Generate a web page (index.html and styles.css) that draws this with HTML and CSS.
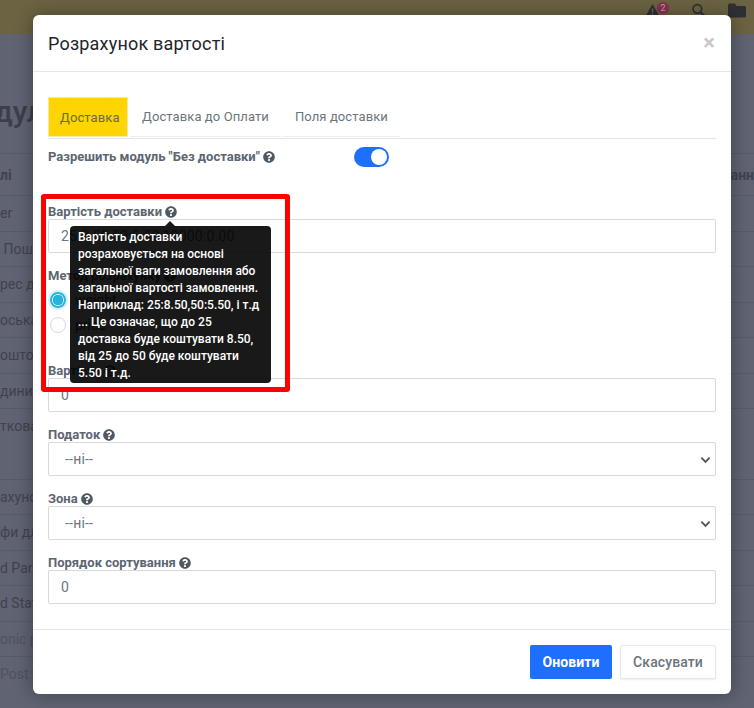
FILE: index.html
```html
<!DOCTYPE html>
<html lang="uk">
<head>
<meta charset="utf-8">
<title>Розрахунок вартості</title>
<link rel="stylesheet" href="styles.css">
</head>
<body>
<svg class="defs" width="0" height="0" aria-hidden="true">
  <symbol id="q" viewBox="0 0 512 512"><path d="M504 256c0 136.997-111.043 248-248 248S8 392.997 8 256C8 119.083 119.043 8 256 8s248 111.083 248 248zM262.655 90c-54.497 0-89.255 22.957-116.045 63.596-3.471 5.266-2.31 12.341 2.739 16.2l34.699 26.31c5.205 3.947 12.621 3.008 16.665-2.122 17.864-22.658 30.113-35.797 57.303-35.797 20.429 0 45.698 13.148 45.698 32.958 0 14.976-12.363 22.667-32.534 33.976C247.128 238.528 216 254.941 216 296v4c0 6.627 5.373 12 12 12h56c6.627 0 12-5.373 12-12v-1.333c0-28.462 83.186-29.647 83.186-106.667 0-58.002-60.165-102-116.531-102zM256 338c-25.365 0-46 20.635-46 46 0 25.364 20.635 46 46 46s46-20.636 46-46c0-25.365-20.635-46-46-46z"/></symbol>
</svg>

<div class="page">
  <header class="topbar">
    <span class="alert">
      <svg class="top-icon" viewBox="0 0 20 18"><path d="M10 1 19.5 17.5H.5z" fill="#2f2f35"/><path d="M9 6.5h2v6H9zM9 13.5h2v2H9z" fill="#6b6342"/></svg>
      <span class="badge">2</span>
    </span>
    <svg class="top-icon" viewBox="0 0 18 18"><circle cx="7.5" cy="7.5" r="5.5" fill="none" stroke="#2f2f35" stroke-width="2.2"/><path d="m11.5 11.5 5 5" stroke="#2f2f35" stroke-width="2.6"/></svg>
    <svg class="top-icon folder" viewBox="0 0 18 15"><path d="M0 2a1.500 1.500 0 0 1 1.500-1.500H7L8.500 3h8A1.500 1.500 0 0 1 18 4.500V13a1.500 1.500 0 0 1-1.500 1.500h-15A1.500 1.500 0 0 1 0 13z" fill="#2f2f35"/></svg>
  </header>
  <h1 class="page-title">Модулі</h1>
  <div class="row row-head"><span>лі</span><span class="row-end">анн</span></div>
  <div class="row"><span>er</span></div>
  <div class="row"><span>&nbsp;Пошта</span></div>
  <div class="row"><span>рес доставка</span></div>
  <div class="row"><span>оська</span></div>
  <div class="row"><span>оштова</span></div>
  <div class="row"><span>диниця</span></div>
  <div class="row row-gap"><span>тковане</span></div>
  <div class="row"><span>ахунок</span></div>
  <div class="row"><span>фи для</span></div>
  <div class="row"><span>d Parcel</span></div>
  <div class="row"><span>d State</span></div>
  <div class="row row-dim"><span>onic post</span></div>
  <div class="row row-dim"><span>Post to</span></div>
</div>

<div class="overlay">
  <div class="modal">
    <div class="modal-header">
      <h2 class="modal-title">Розрахунок вартості</h2>
      <span class="close">×</span>
    </div>

    <div class="modal-body">
      <ul class="tabs">
        <li class="tab tab-active">Доставка</li>
        <li class="tab">Доставка до Оплати</li>
        <li class="tab">Поля доставки</li>
      </ul>

      <div class="switch-row">
        <label class="label switch-label">Разрешить модуль "Без доставки" <svg class="help"><use href="#q"/></svg></label>
        <span class="switch"><span class="knob"></span></span>
      </div>

      <div class="group">
        <label class="label">Вартість доставки <svg class="help"><use href="#q"/></svg></label>
        <div class="control">25:8.50,50:5.50,10000:0.00</div>
      </div>

      <div class="group radios">
        <label class="label">Метод розрахунку <svg class="help"><use href="#q"/></svg></label>
        <div class="radio"><span class="dot dot-on"></span>weight</div>
        <div class="radio"><span class="dot"></span>price</div>
      </div>

      <div class="group">
        <label class="label">Вартість <svg class="help"><use href="#q"/></svg></label>
        <div class="control">0</div>
      </div>

      <div class="group">
        <label class="label">Податок <svg class="help"><use href="#q"/></svg></label>
        <div class="control select">--ні--<svg class="chev" viewBox="0 0 12 8"><path d="M1.500 1.500 6 6l4.500-4.500" fill="none" stroke="#555" stroke-width="2"/></svg></div>
      </div>

      <div class="group">
        <label class="label">Зона <svg class="help"><use href="#q"/></svg></label>
        <div class="control select">--ні--<svg class="chev" viewBox="0 0 12 8"><path d="M1.500 1.500 6 6l4.500-4.500" fill="none" stroke="#555" stroke-width="2"/></svg></div>
      </div>

      <div class="group group-last">
        <label class="label">Порядок сортування <svg class="help"><use href="#q"/></svg></label>
        <div class="control">0</div>
      </div>
    </div>

    <div class="modal-footer">
      <button class="btn btn-primary">Оновити</button>
      <button class="btn btn-light">Скасувати</button>
    </div>

    <div class="highlight"></div>
    <div class="tooltip">Вартість доставки розраховується на основі загальної ваги замовлення або загальної вартості замовлення. Наприклад: 25:8.50,50:5.50, і т.д ... Це означає, що до 25 доставка буде коштувати 8.50, від 25 до 50 буде коштувати 5.50 і т.д.</div>
  </div>
</div>
</body>
</html>
```

FILE: styles.css
```css
* { box-sizing: border-box; }
html, body { margin: 0; height: 100%; }
body {
  font-family: Roboto, "Noto Sans", sans-serif;
  background: #5f6372;
  overflow: hidden;
  color: #495057;
}
.defs { position: absolute; }

/* dimmed page behind the dialog */
.page { height: 708px; overflow: hidden; color: #3f424e; font-size: 14px; }
.topbar {
  height: 34px;
  background: #6b6342;
  display: flex;
  justify-content: flex-end;
  align-items: flex-start;
  gap: 22px;
  padding: 2px 8px 0 0;
}
.alert { display: flex; }
.top-icon { width: 15px; height: 14px; margin-top: 1px; }
.folder { width: 18px; height: 15px; }
.badge {
  width: 12px; height: 12px;
  margin-left: -3px;
  border-radius: 50%;
  background: #8c2f50;
  color: #b9a9a9;
  font-size: 9px;
  line-height: 12px;
  text-align: center;
}
.page-title { margin: 60px 0 18px -48px; font-size: 30px; line-height: 36px; font-weight: 500; color: #3c3f4b; height: 41px; white-space: nowrap; }
.row {
  height: 35.5px;
  border-top: 1px solid #575b69;
  display: flex;
  justify-content: space-between;
  align-items: center;
  white-space: nowrap;
}
.row-head { height: 42px; font-weight: 700; }
.row-end { font-weight: 700; }
.row-gap { margin-bottom: 35px; }
.row-dim { color: #4f525f; }

/* dialog */
.overlay { position: absolute; inset: 0; padding: 15px 23px 14px 33px; }
.modal {
  position: relative;
  height: 679px;
  background: #fff;
  border-radius: 6px;
  box-shadow: 0 0 18px rgba(0, 0, 0, .35);
  display: flex;
  flex-direction: column;
}
.modal-header {
  height: 57px;
  padding: 0 15px;
  border-bottom: 1px solid #e5e8ea;
  display: flex;
  justify-content: space-between;
  align-items: center;
}
.modal-title { margin: 0; font-size: 18px; font-weight: 400; color: #212529; letter-spacing: .2px; }
.close { font-size: 22px; font-weight: 700; line-height: 1; color: #c9c9c9; margin-right: 0; padding-right: 1px; }
.modal-body { flex: 1; padding: 25px 15px 0; }
.tabs {
  list-style: none;
  margin: 0 0 8px;
  padding: 0;
  height: 42px;
  display: flex;
  gap: 2px;
  border-bottom: 1px solid #e3e6e8;
}
.tab {
  height: 40px;
  padding: 0 12px;
  border-bottom: 1px solid #eceef0;
  font-size: 13px;
  line-height: 39px;
  color: #6c757d;
  letter-spacing: .1px;
}
.tab-active {
  width: 80px;
  padding: 0 11px;
  background: #ffd400;
  border: 1px solid #f3e9ae;
  color: #6b6a4a;
}
.switch-row { height: 20px; margin: 0 0 38px; display: flex; align-items: center; }
.switch-label { width: 306px; }
.switch { width: 35px; height: 20px; border-radius: 10px; background: #1f6fff; display: flex; justify-content: flex-end; padding: 2px; }
.knob { width: 16px; height: 16px; border-radius: 50%; background: #fff; }
.label {
  display: block;
  height: 14px;
  font-size: 13px;
  font-weight: 700;
  line-height: 14px;
  color: #5c6670;
  white-space: nowrap;
}
.help { width: 12px; height: 12px; fill: #4f5963; vertical-align: -1.5px; }
.group { margin-bottom: 16px; }
.group-last { margin-bottom: 0; }
.control {
  position: relative;
  height: 34px;
  border: 1px solid #d6dadc;
  border-radius: 2px;
  padding: 0 12px;
  font-size: 14px;
  line-height: 33px;
  color: #6c757d;
  letter-spacing: .2px;
}
.select { padding-left: 16px; }
.chev { position: absolute; right: 4px; top: 13px; width: 11px; height: 8px; }
.radios { height: 79px; }
.radio { height: 25px; padding-top: 4px; display: flex; align-items: center; font-size: 14px; color: #495057; }
.radios .label { margin-bottom: 4px; }
.radio { padding-top: 0; }
.dot { width: 16px; height: 16px; margin: 0 9px 0 2px; border: 1px solid #d6dadc; border-radius: 50%; background: #fff; }
.dot-on { border: 2px solid #27b3de; background: radial-gradient(circle, #27b3de 0 5px, #fff 5.500px); box-shadow: 0 0 0 2px rgba(39, 179, 222, .2); }
.modal-footer {
  height: 65px;
  padding: 15px;
  border-top: 1px solid #e5e8ea;
  display: flex;
  justify-content: flex-end;
  gap: 8px;
}
.btn { height: 34px; border-radius: 2px; font-family: inherit; font-size: 14px; letter-spacing: .1px; padding: 0; }
.btn-primary { width: 82px; border: 0; background: #1f6fff; color: #fff; font-weight: 700; }
.btn-light { width: 96px; border: 1px solid #e6e8ea; background: #fff; color: #6c757d; font-weight: 500; box-shadow: 0 1px 2px rgba(0,0,0,.08); }

/* annotation and tooltip lying over the form */
.highlight {
  position: absolute;
  left: 8px; top: 179px;
  width: 249px; height: 198px;
  border: 5px solid #f00;
  border-radius: 3px;
  pointer-events: none;
}
.tooltip {
  position: absolute;
  left: 37px; top: 211px;
  width: 201px; height: 157px;
  padding: 3px 8px;
  background: rgba(0, 0, 0, .9);
  border-radius: 4px;
  color: #fff;
  font-size: 12px;
  font-weight: 500;
  line-height: 17px;
}
.tooltip::before {
  content: "";
  position: absolute;
  left: 95px; top: -5px;
  border: 5px solid transparent;
  border-top: 0;
  border-bottom-color: rgba(0, 0, 0, .9);
}
```
